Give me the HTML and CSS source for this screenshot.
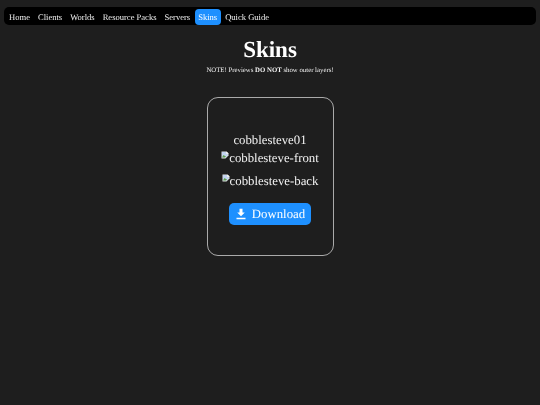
FILE: index.html
```html
<!DOCTYPE html>
<html lang="en">
<head>
  <meta charset="UTF-8">
  <title>Skins</title>
  <link rel="stylesheet" href="styles.css">
</head>
<body>
  <!-- Navigation -->
  <nav class="navbar">
    <a href="#">Home</a>
    <a href="#">Clients</a>
    <a href="#">Worlds</a>
    <a href="#">Resource Packs</a>
    <a href="#">Servers</a>
    <a href="#" class="active">Skins</a>
    <a href="#">Quick Guide</a>
  </nav>

  <h1>Skins</h1>
  <p class="note">NOTE! Previews <b>DO NOT</b> show outer layers!</p>

  <!-- Skin card -->
  <div class="skin-card">
    <div class="skin-name">cobblesteve01</div>
    <div class="preview">
      <svg class="broken" viewBox="0 0 16 16"><path d="M1 1h10l4 4v4l-6 6H1z" fill="#e4e4e4"/><path d="M2 2h8v4h4v2l-5 5H2z" fill="#c3d4f0"/><path d="M2 13l3-5 3 2 2 1-2 2z" fill="#5f9e4e"/><path d="M11 1l4 4h-4z" fill="#fff"/></svg>cobblesteve-front
    </div>
    <div class="preview">
      <svg class="broken" viewBox="0 0 16 16"><path d="M1 1h10l4 4v4l-6 6H1z" fill="#e4e4e4"/><path d="M2 2h8v4h4v2l-5 5H2z" fill="#c3d4f0"/><path d="M2 13l3-5 3 2 2 1-2 2z" fill="#5f9e4e"/><path d="M11 1l4 4h-4z" fill="#fff"/></svg>cobblesteve-back
    </div>
    <a href="#" class="download">
      <svg class="dl-icon" viewBox="0 0 16 16"><path d="M6 1h4v5h3l-5 5-5-5h3z" fill="#fff"/><path d="M2 13h12v2H2z" fill="#fff"/></svg>
      Download
    </a>
  </div>
</body>
</html>
```

FILE: styles.css
```css
* {
  box-sizing: border-box;
}

html {
  background-color: #1e1e1e;
}

body {
  margin: 0;
  padding: 7px 4px 0;
  color: #fff;
  font-family: "Liberation Serif", serif;
  text-align: center;
  text-rendering: geometricPrecision;
  will-change: transform;
}

/* Navigation */
.navbar {
  display: flex;
  align-items: flex-end;
  height: 18px;
  padding: 0 1.5px;
  background-color: #000;
  border-radius: 5px;
}

.navbar a {
  padding: 2px 3.6px;
  margin-right: 0.8px;
  color: #f2f2f2;
  font-size: 8.55px;
  line-height: 12px;
  text-decoration: none;
  border-radius: 4px;
}

.navbar a.active {
  background-color: #1e90ff;
  color: #fff;
}

h1 {
  margin: 12px 0 0;
  font-size: 23px;
  line-height: 26px;
}

.note {
  margin: 3px 0 0;
  font-size: 6.8px;
  line-height: 9px;
  color: #f2f2f2;
}

/* Skin card */
.skin-card {
  width: 127px;
  height: 159px;
  margin: 22px auto 0;
  padding-top: 35px;
  border: 1px solid #aaa;
  border-radius: 11px;
  font-size: 12.8px;
  color: #f2f2f2;
}

.skin-name {
  line-height: 15px;
}

.preview {
  margin-top: 3px;
  line-height: 15px;
  white-space: nowrap;
}

.preview + .preview {
  margin-top: 8px;
}

.broken {
  width: 8px;
  height: 8px;
  vertical-align: 3px;
}

.download {
  display: inline-flex;
  align-items: center;
  gap: 5px;
  margin-top: 14px;
  padding: 0 6px;
  height: 22px;
  background-color: #1e90ff;
  color: #fff;
  font-size: 12.8px;
  text-decoration: none;
  border-radius: 5px;
}

.dl-icon {
  width: 12px;
  height: 12px;
}
```
